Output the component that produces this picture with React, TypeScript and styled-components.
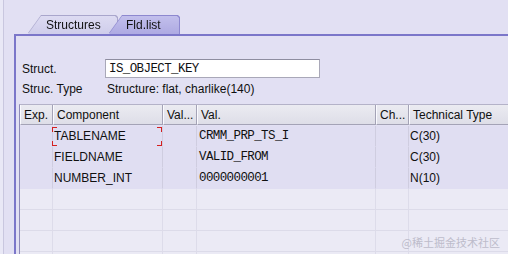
import React from "react";
import styled, { createGlobalStyle } from "styled-components";

const GlobalStyle = createGlobalStyle`
  html, body {
    margin: 0;
    padding: 0;
    background: #e2e0f3;
    overflow: hidden;
  }
  body {
    font-family: "Liberation Sans", Arial, sans-serif;
    font-size: 12px;
    color: #101010;
  }
`;

const Screen = styled.div`
  position: relative;
  width: 508px;
  height: 254px;
  display: flex;
  overflow: hidden;
  background: #e2e0f3;
`;

const Gutter = styled.div`
  width: 3px;
  flex: none;
  border-right: 1px solid #c9c7df;
  background: #e9e8f6;
`;

const Workspace = styled.div`
  flex: 1;
  display: flex;
  flex-direction: column;
  padding-left: 10px;
  min-width: 0;
`;

const TabStrip = styled.div`
  height: 34px;
  display: flex;
  align-items: flex-end;
  padding-left: 14px;
  flex: none;
`;

const TabShape = styled.div<{ $active?: boolean }>`
  position: relative;
  z-index: ${(p) => (p.$active ? 2 : 1)};
  margin-left: ${(p) => (p.$active ? "-8px" : "0")};
  filter: drop-shadow(0 -1px 0 ${(p) => (p.$active ? "#8d88cf" : "#a9a6cc")})
    drop-shadow(1px 0 0 ${(p) => (p.$active ? "#8d88cf" : "#a9a6cc")});
`;

const Tab = styled.div<{ $active?: boolean; $width: number }>`
  width: ${(p) => p.$width}px;
  height: 18px;
  box-sizing: border-box;
  padding-left: ${(p) => (p.$active ? 17 : 18)}px;
  display: flex;
  align-items: center;
  font-size: 12px;
  color: #111;
  background: ${(p) =>
    p.$active
      ? "linear-gradient(#c2bfec, #aeaae2)"
      : "linear-gradient(#dddbf2, #cfcdeb)"};
  clip-path: polygon(13px 0, calc(100% - 2px) 0, 100% 2px, 100% 100%, 0 100%);
`;

const Panel = styled.div`
  flex: 1;
  border-top: 2px solid #7b76c9;
  border-left: 2px solid #7b76c9;
  background: #e2e0f3;
  padding: 22px 0 0 3px;
  display: flex;
  flex-direction: column;
  min-height: 0;
`;

const Form = styled.div`
  padding-left: 3px;
  display: flex;
  flex-direction: column;
`;

const FormRow = styled.div<{ $height: number }>`
  height: ${(p) => p.$height}px;
  display: flex;
  align-items: center;
`;

const Label = styled.span`
  width: 83px;
  flex: none;
`;

const Input = styled.div`
  width: 215px;
  height: 19px;
  box-sizing: border-box;
  background: #ffffff;
  border: 1px solid #a9a8b8;
  border-top-color: #8e8da0;
  padding-left: 3px;
  display: flex;
  align-items: center;
  font-family: "Liberation Mono", "Courier New", monospace;
  font-size: 12.5px;
  letter-spacing: -0.6px;
  color: #111;
`;

const PlainValue = styled.span`
  padding-left: 2px;
`;

const Table = styled.div`
  margin-top: 5px;
  border-left: 1px solid #8e8ab8;
  border-top: 1px solid #b4b2c8;
  display: grid;
  grid-template-columns: 33px 110px 34px 179px 33px 120px;
  grid-auto-rows: 21px;
  flex: 1;
  align-content: start;
`;

const HeadCell = styled.div`
  height: 20px;
  box-sizing: border-box;
  display: flex;
  align-items: center;
  padding-left: 3px;
  background: linear-gradient(#ebebf1, #dedee8);
  border-right: 1px solid #a4a3b6;
  border-left: 1px solid #fafaff;
  border-bottom: 1px solid #a4a3b6;
  white-space: nowrap;
  overflow: hidden;
`;

const Cell = styled.div<{ $mono?: boolean; $empty?: boolean }>`
  position: relative;
  box-sizing: border-box;
  display: flex;
  align-items: center;
  padding-left: ${(p) => (p.$mono ? 2 : 1)}px;
  background: ${(p) => (p.$empty ? "#ebeaf5" : "#e0def2")};
  border-right: 1px solid ${(p) => (p.$empty ? "#dddcea" : "#cfcde0")};
  border-bottom: 1px solid ${(p) => (p.$empty ? "#dcdbe9" : "transparent")};
  font-family: ${(p) =>
    p.$mono
      ? `"Liberation Mono", "Courier New", monospace`
      : `"Liberation Sans", Arial, sans-serif`};
  font-size: ${(p) => (p.$mono ? "12.5px" : "12px")};
  letter-spacing: ${(p) => (p.$mono ? "-0.6px" : "0")};
  white-space: nowrap;
  overflow: visible;
`;

const FocusFrame = styled.span`
  position: absolute;
  left: -1px;
  top: 1px;
  right: 0;
  bottom: 0;
  pointer-events: none;
  background:
    linear-gradient(#d42020, #d42020) left top / 5px 1px no-repeat,
    linear-gradient(#d42020, #d42020) left top / 1px 5px no-repeat,
    linear-gradient(#d42020, #d42020) right top / 5px 1px no-repeat,
    linear-gradient(#d42020, #d42020) right top / 1px 5px no-repeat,
    linear-gradient(#d42020, #d42020) left bottom / 5px 1px no-repeat,
    linear-gradient(#d42020, #d42020) left bottom / 1px 5px no-repeat,
    linear-gradient(#d42020, #d42020) right bottom / 5px 1px no-repeat,
    linear-gradient(#d42020, #d42020) right bottom / 1px 5px no-repeat;
`;

const Watermark = styled.span`
  position: absolute;
  right: 8px;
  bottom: 5px;
  font-family: "Noto Sans CJK SC", sans-serif;
  font-size: 11px;
  line-height: 14px;
  color: #bdbccb;
  pointer-events: none;
`;

const headers = ["Exp.", "Component", "Val...", "Val.", "Ch...", "Technical Type"];

const rows = [
  { component: "TABLENAME", value: "CRMM_PRP_TS_I", type: "C(30)" },
  { component: "FIELDNAME", value: "VALID_FROM", type: "C(30)" },
  { component: "NUMBER_INT", value: "0000000001", type: "N(10)" },
];

export default function App() {
  return (
    <>
      <GlobalStyle />
      <Screen>
        <Gutter />
        <Workspace>
          <TabStrip>
            <TabShape>
              <Tab $width={89}>Structures</Tab>
            </TabShape>
            <TabShape $active>
              <Tab $active $width={70}>Fld.list</Tab>
            </TabShape>
          </TabStrip>
          <Panel>
            <Form>
              <FormRow $height={21}>
                <Label>Struct.</Label>
                <Input>IS_OBJECT_KEY</Input>
              </FormRow>
              <FormRow $height={20}>
                <Label>Struc. Type</Label>
                <PlainValue>Structure: flat, charlike(140)</PlainValue>
              </FormRow>
            </Form>
            <Table>
              {headers.map((h) => (
                <HeadCell key={h}>{h}</HeadCell>
              ))}
              {rows.map((r, i) => (
                <React.Fragment key={r.component}>
                  <Cell />
                  <Cell>
                    {r.component}
                    {i === 0 && <FocusFrame />}
                  </Cell>
                  <Cell />
                  <Cell $mono>{r.value}</Cell>
                  <Cell />
                  <Cell>{r.type}</Cell>
                </React.Fragment>
              ))}
              {[0, 1, 2, 3].map((n) =>
                headers.map((h) => <Cell key={`${n}-${h}`} $empty />)
              )}
            </Table>
          </Panel>
        </Workspace>
        <Watermark>@稀土掘金技术社区</Watermark>
      </Screen>
    </>
  );
}
